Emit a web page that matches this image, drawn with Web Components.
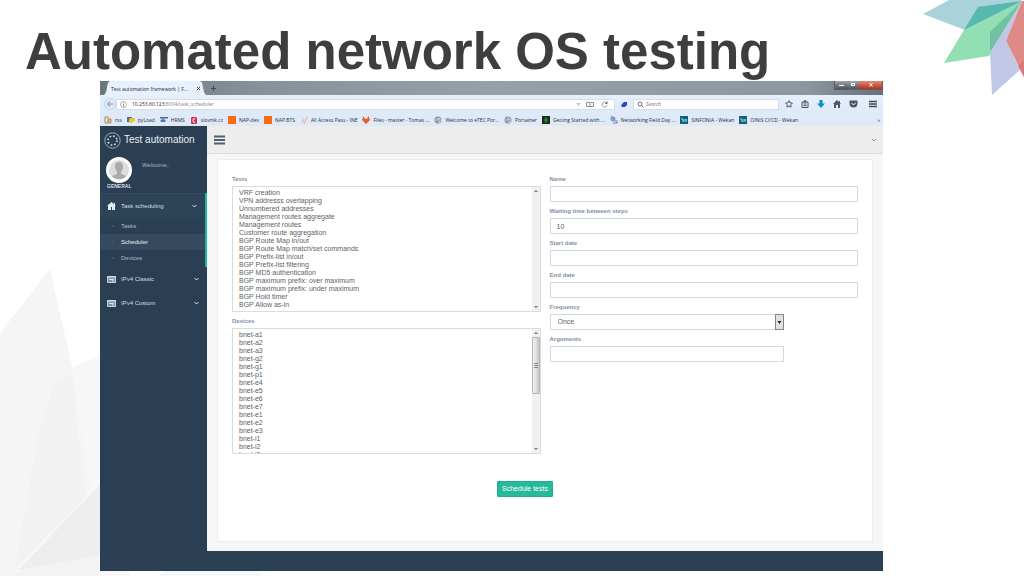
<!DOCTYPE html>
<html lang="en">
<head>
<meta charset="utf-8">
<title>Automated network OS testing</title>
<style>
  body { margin: 0; background: #fff; font-family: "Liberation Sans", Arial, sans-serif; }
</style>
</head>
<body>
<slide-page>
  <span slot="title">Automated network OS testing</span>
  <browser-window>
    <book-mark slot="bookmarks" icon="rss">rss</book-mark>
    <book-mark slot="bookmarks" icon="py">pyLoad</book-mark>
    <book-mark slot="bookmarks" icon="hr">HRMS</book-mark>
    <book-mark slot="bookmarks" icon="slov">slovnik.cz</book-mark>
    <book-mark slot="bookmarks" icon="nap">NAP-dev</book-mark>
    <book-mark slot="bookmarks" icon="nap">NAP.BTS</book-mark>
    <book-mark slot="bookmarks" icon="ine">All Access Pass - INE</book-mark>
    <book-mark slot="bookmarks" icon="lab">Files - master - Tomas ...</book-mark>
    <book-mark slot="bookmarks" icon="globe">Welcome to eTEC Por...</book-mark>
    <book-mark slot="bookmarks" icon="globe">Portainer</book-mark>
    <book-mark slot="bookmarks" icon="start">Getting Started with ...</book-mark>
    <book-mark slot="bookmarks" icon="field">Networking Field Day ...</book-mark>
    <book-mark slot="bookmarks" icon="wekan">SINFONIA - Wekan</book-mark>
    <book-mark slot="bookmarks" icon="wekan">OINIS CI/CD - Wekan</book-mark>
    <task-app>
      <side-bar slot="side"></side-bar>
      <schedule-form></schedule-form>
    </task-app>
  </browser-window>
</slide-page>

<script>
const define = (name, html, init) => {
  const template = document.createElement('template');
  template.innerHTML = html;
  customElements.define(name, class extends HTMLElement {
    constructor() {
      super();
      this.attachShadow({ mode: 'open' }).append(template.content.cloneNode(true));
    }
    connectedCallback() { if (init) init(this, this.shadowRoot); }
  });
};

/* The slide: heading, decorative shards, and the slotted window */
define('slide-page', `
<style>
  :host { display: block; position: relative; min-height: 100vh; overflow: hidden; box-sizing: border-box; padding: 23px 141px 5px 100px; }
  .shards, .leaves { position: absolute; z-index: -1; }
  .shards { left: 0; bottom: 0; width: 260px; height: 310px; }
  .leaves { right: 0; top: 0; width: 104px; height: 100px; z-index: 0; }
  h1 { margin: 0 -100px 0 -75px; font-size: 51px; line-height: 58px; font-weight: bold; color: #3e3e40; white-space: nowrap; }
</style>
<svg class="shards" viewBox="0 0 260 310" aria-hidden="true">
  <path fill="#f7f7f7" d="M72 101 130 77V310H60z"/>
  <path fill="#f5f5f5" d="M0 67 50 3 72 101 90 225 12 310H0z"/>
  <path fill="#f2f2f2" d="M54 117 72 109 84 220 88 238 15 303 36 180z"/>
  <path fill="#eeeeee" d="M15 303 110 206V288L20 304z"/>
  <path fill="#f8f8f8" d="M15 303 80 237 110 196V208L20 302z"/>
  <path fill="#f3f3f3" d="M20 304 100 289V310H8z"/>
  <path fill="#f3f8fb" d="M158 310 168 302H260V310z"/>
</svg>
<svg class="leaves" viewBox="920 0 104 100" aria-hidden="true">
  <path fill="#a9d2da" d="M923 14 949 0H1021L1022 1 965 30z"/>
  <path fill="#93dfb4" d="M944 63 964 30 1022 1 989 56z"/>
  <path fill="#56b8af" d="M964 30 978 7 1022 1z"/>
  <path fill="#6fc3a3" d="M990 32 1022 1 990 53z"/>
  <path fill="#c0c8e6" d="M990 52 1022 1 1006 41 1020 70 992 95z"/>
  <path fill="#dd8a88" d="M1022 1H1024V77L1006 41z"/>
  <path fill="#d97877" d="M1018 66 1024 60V77z"/>
</svg>
<h1><slot name="title"></slot></h1>
<slot></slot>`);

const bookmarkIcons = {
  rss: '<path d="M1 1h3v6H1zM5 3h2v4H5z" fill="none" stroke="#b5854a"/><path d="M3 6h4" stroke="#e8a145"/>',
  py: '<path d="M0 1h5v3H2v2H0z" fill="#3b78a8"/><path d="M3 2h5v3L4 7H2V4z" fill="#e9c92f"/>',
  hr: '<path d="M0 1h8v1.500H0z" fill="#4a64a0"/><path d="M1 4h4v1.500H1zM2 2l3 3" stroke="#5b74ad" fill="#5b74ad"/>',
  slov: '<rect x="1" y="1" width="6" height="7" rx="1" fill="#c83a54"/><path d="M5 2.500a2 2 0 1 0 0 4" fill="none" stroke="#fff"/>',
  nap: '<rect width="8" height="8" fill="#fb6b12"/>',
  ine: '<path d="M2 7 4 3M4 8 7 1" stroke="#e9a988" fill="none"/>',
  lab: '<path d="M4 8 0 4 1.500 0 3 3h2L6.500 0 8 4z" fill="#ee5a2b"/>',
  globe: '<circle cx="4" cy="4" r="3.500" fill="#8b98a8"/><path d="M1 4h3V2l2 1v3H4" fill="none" stroke="#dfe6ef" stroke-width=".8"/>',
  start: '<rect width="8" height="8" fill="#182c1c"/><path d="M4 1v6M3 3v2M5 3v2" stroke="#3fa03b"/>',
  field: '<circle cx="3" cy="3" r="2" fill="#9cb0d8" stroke="#6c86bd"/><path d="M1 0 7 7M3 7h4V4" fill="none" stroke="#6c86bd"/>',
  wekan: '<rect width="8" height="8" fill="#0d6478"/><path d="M1 3h2v3M4 3v3M6 3v3M5 4h2" fill="none" stroke="#b8dfe6" stroke-width=".8"/>'
};
define('book-mark', `
<style>
  :host { display: block; flex: none; }
  a { display: flex; align-items: center; gap: 3px; color: #26303c; text-decoration: none; white-space: nowrap; }
  svg { width: 8px; height: 8px; flex: none; }
</style>
<a href="#"><svg viewBox="0 0 8 8" aria-hidden="true"></svg><span><slot></slot></span></a>`,
(host, root) => { root.querySelector('svg').innerHTML = bookmarkIcons[host.getAttribute('icon')]; });

define('browser-window', `
<style>
  :host { display: block; font: 5px/8px "Open Sans", sans-serif; color: #222b36; }
  .tabs { height: 14px; display: flex; align-items: flex-end; background: linear-gradient(90deg, #6d757c, #87919a 20%, #95a0a8 50%, #8e979e 90%, #68717a); }
  .tab { box-sizing: border-box; height: 14px; width: 102px; margin-left: 4px; padding: 1px 5px 0 7px; display: flex; align-items: center; justify-content: space-between; background: #e7f0fb; clip-path: polygon(0 100%, 2px 80%, 4px 10%, 6px 0, 96px 0, 98px 10%, 100px 80%, 100% 100%); white-space: nowrap; }
  button { border: 0; padding: 0; margin: 0; background: none; color: inherit; font: inherit; display: flex; }
  svg { display: block; }
  .new { margin: 0 0 3px 4px; }
  .controls { margin-left: auto; align-self: flex-start; display: flex; border: 1px solid #59606a; border-top: 0; }
  .controls button { width: 12px; height: 8px; justify-content: center; background: linear-gradient(#a0a5aa, #4c545d); }
  .controls .close { width: 23px; background: linear-gradient(#dd8d79, #b92f18); }
  .nav { height: 18px; padding: 0 6px 0 4px; display: flex; align-items: center; background: linear-gradient(#e7effc, #dfe9f8); }
  .back { width: 12px; height: 12px; border: 1px solid #c3d4e6; border-radius: 50%; box-sizing: border-box; align-items: center; justify-content: center; background: #e0ebf7; }
  .field { box-sizing: border-box; height: 11px; display: flex; align-items: center; background: #fff; border: 1px solid #d3deec; }
  .url { flex: 1; padding: 0 6px 0 3px; gap: 5px; }
  .url p { flex: 1; margin: 0; color: #7c828a; }
  .url b { font-weight: normal; color: #20262e; }
  .url .reader { margin-right: 2px; }
  .ext { margin: 0 6px; }
  .search { width: 146px; padding: 0 3px; gap: 2px; }
  input { flex: 1; min-width: 0; border: 0; padding: 0; background: none; font: italic 5px/8px "Open Sans", sans-serif; outline: 0; }
  input::placeholder { color: #6f757c; opacity: 1; }
  .tools { display: flex; gap: 8px; margin-left: 6px; }
  .tools button:last-child { margin-left: 3px; }
  .marks { height: 13px; padding: 1px 3px 0 4px; display: flex; align-items: center; gap: 5px; overflow: hidden; background: #dfe9f8; box-sizing: border-box; }
  .more { margin-left: auto; }
</style>
<div class="tabs">
  <div class="tab"><span>Test automation framework | F...</span>
    <button aria-label="Close tab"><svg width="5" height="5"><path d="M1 1 4 4M4 1 1 4" stroke="#555"/></svg></button></div>
  <button class="new" aria-label="New tab"><svg width="7" height="7"><path d="M3.500 1v5M1 3.500h5" stroke="#424b55"/></svg></button>
  <div class="controls">
    <button aria-label="Minimize"><svg width="8" height="7"><path d="M2 4.500h5" stroke="#fff"/></svg></button>
    <button aria-label="Restore"><svg width="8" height="7"><rect x="2.500" y="2.500" width="3" height="2" fill="none" stroke="#fff"/></svg></button>
    <button class="close" aria-label="Close"><svg width="8" height="7"><path d="M2.500 2 5.500 5.500M5.500 2 2.500 5.500" stroke="#fff"/></svg></button>
  </div>
</div>
<div class="nav">
  <button class="back" aria-label="Back"><svg width="8" height="8"><path d="M7 4H2M4 1.500 1.500 4 4 6.500" fill="none" stroke="#a5b2c0" stroke-width="1.500"/></svg></button>
  <div class="field url">
    <svg width="7" height="7"><circle cx="3.500" cy="3.500" r="3" fill="none" stroke="#888" stroke-width=".7"/><path d="M3.500 3v2.500M3.500 1.500v1" stroke="#777" stroke-width=".8"/></svg>
    <p><b>10.253.60.123</b>:8004/task_scheduler</p>
    <svg width="5" height="5"><path d="M0 1h5L2.500 4z" fill="#c4c8cd"/></svg>
    <svg class="reader" width="8" height="7"><path d="M.5 1.500h3l.5.500.5-.500h3v4h-7zM4 2v4" fill="none" stroke="#8a939c"/></svg>
    <svg width="7" height="7"><path d="M5.500 2A2.500 2.500 0 1 0 6 4" fill="none" stroke="#717b85" stroke-width=".8"/><path d="M6.500 0v3h-3z" fill="#717b85"/></svg>
  </div>
  <button class="ext" aria-label="Extension"><svg width="6" height="7"><path d="M1 3 3 1h3v3L4 6H1L0 5z" fill="#2948c8"/></svg></button>
  <div class="field search">
    <svg width="7" height="7"><circle cx="3" cy="3" r="2" fill="none" stroke="#66707a"/><path d="M4.500 4.500 6.500 6.500" stroke="#66707a"/></svg>
    <input type="search" placeholder="Search" aria-label="Search">
  </div>
  <div class="tools">
    <button aria-label="Bookmark"><svg width="8" height="8" viewBox="0 0 8 8"><path d="m4 .700 1 2.100 2.400.300-1.700 1.700.400 2.300L4 6l-2.100 1.100.400-2.300L.600 3.100 3 2.800z" fill="none" stroke="#4d5864"/></svg></button>
    <button aria-label="Bookmarks list"><svg width="8" height="8"><path d="M1 2h6v5.500H1zM3 .800h2V2H3zM2.500 4h3M2.500 5.700h3" fill="none" stroke="#4d5864"/></svg></button>
    <button aria-label="Downloads"><svg width="8" height="8"><path d="M2.500 0h3v3.500H8L4 8 0 3.500h2.500z" fill="#138bc9"/></svg></button>
    <button aria-label="Home"><svg width="8" height="8"><path d="M4 0 0 4h1v4h2V5h2v3h2V4h1L7 3V1H6v1z" fill="#4d5864"/></svg></button>
    <button aria-label="Pocket"><svg width="9" height="8"><path d="M.5 .500h8v3a4 4 0 0 1-8 0z" fill="#4d5864"/><path d="M2.500 3 4.500 5 6.500 3" fill="none" stroke="#fff"/></svg></button>
    <button aria-label="Menu"><svg width="8" height="8"><path d="M0 1.500h8M0 4h8M0 6.500h8" stroke="#414b56" stroke-width="1.500"/></svg></button>
  </div>
</div>
<nav class="marks"><slot name="bookmarks"></slot><span class="more">»</span></nav>
<slot></slot>`);

define('task-app', `
<style>
  :host { display: grid; grid-template-columns: 107px minmax(0, 1fr); padding-bottom: 20px; background: #2a3f54; font: 6px/8px "Liberation Sans", Arial, sans-serif; color: #73879c; }
  main { background: #f5f6f7; }
  header { box-sizing: border-box; height: 28px; padding: 0 7px; display: flex; align-items: center; justify-content: space-between; background: #ededed; border-bottom: 1px solid #d9dee4; }
  button { display: flex; padding: 0; border: 0; background: none; }
  section { padding: 5px 10px 9px; }
</style>
<slot name="side"></slot>
<main>
  <header>
    <button aria-label="Toggle menu"><svg width="11" height="10"><path d="M0 1.500h11M0 5h11M0 8.500h11" stroke="#51606f" stroke-width="2"/></svg></button>
    <button aria-label="User menu"><svg width="4" height="4"><path d="M0 1 2 3 4 1" fill="none" stroke="#8b939b"/></svg></button>
  </header>
  <section><slot></slot></section>
</main>`);

define('side-bar', `
<style>
  :host { display: block; color: #d5dde5; }
  a { color: inherit; text-decoration: none; }
  .brand { height: 28px; padding: 0 4px; display: flex; align-items: center; gap: 3px; font-size: 10px; line-height: 12px; color: #ecf0f1; white-space: nowrap; }
  .profile { height: 39px; padding: 0 6px; display: flex; gap: 10px; color: #a9b6c3; }
  .profile p { margin: 7px 0 0; }
  figure { margin: 0; width: 26px; }
  figure svg { display: block; margin-top: 3px; }
  figcaption { font-size: 5px; line-height: 6px; font-weight: bold; padding-left: 1px; color: #d5dde5; }
  .item { height: 24px; padding: 0 8px 0 7px; display: grid; grid-template-columns: 9px 1fr auto; column-gap: 5px; align-items: center; }
  .open { border-right: 2px solid #1abb9c; }
  .open .item { background: #2d4358; border-top: 1px solid #34495e; box-sizing: border-box; }
  ul { margin: 0; padding: 1px 0; list-style: none; }
  li { height: 16px; display: grid; grid-template-columns: 9px 1fr; column-gap: 4px; padding-left: 8px; align-items: center; color: #aebbc8; }
  li::before { content: ""; width: 2px; height: 2px; margin-left: 4px; border-radius: 50%; background: #42586d; }
  li.current { background: #354a5f; color: #e8edf2; }
</style>
<a class="brand" href="#">
  <svg width="17" height="17"><circle cx="8.500" cy="8.500" r="7.700" fill="none" stroke="#9dabb8"/><circle cx="8.500" cy="8.500" r="4.500" fill="none" stroke="#dfe5ea" stroke-width="1.600" stroke-dasharray="1.600 1.940"/></svg>
  <span>Test automation</span></a>
<div class="profile">
  <figure>
    <svg width="26" height="26"><circle cx="13" cy="13" r="11.500" fill="#dcdcdc" stroke="#fff" stroke-width="3"/><path d="M13 5c-3 0-4 2-4 5 0 2 1 3 2 5v2l-5 2c2 4 12 4 14 0l-5-2v-2c1-2 2-3 2-5 0-3-1-5-4-5" fill="#aaa"/></svg>
    <figcaption>GENERAL</figcaption>
  </figure>
  <p>Welcome,</p>
</div>
<nav>
  <div class="open">
    <a class="item" href="#"><svg width="9" height="8"><path d="M4.500 0 0 4h1v4h3V5h1v3h3V4h1L8 3V1H7v1z" fill="#e6ebef"/></svg><span>Task scheduling</span><svg width="5" height="4"><path d="M.5 1 2.500 3 4.500 1" fill="none" stroke="#dfe5ea"/></svg></a>
    <ul><li><a href="#">Tasks</a></li><li class="current"><a href="#">Scheduler</a></li><li><a href="#">Devices</a></li></ul>
  </div>
  <a class="item" href="#"><svg width="9" height="7"><path d="M.5 .500h8v6h-8z" fill="#7f91a2" stroke="#c7d1da"/><path d="M0 1h9M2 3.500h5M5 5h2" fill="none" stroke="#dbe2e8"/></svg><span>IPv4 Classic</span><svg width="5" height="4"><path d="M.5 1 2.500 3 4.500 1" fill="none" stroke="#dfe5ea"/></svg></a>
  <a class="item" href="#"><svg width="9" height="7"><path d="M.5 .500h8v6h-8z" fill="#7f91a2" stroke="#c7d1da"/><path d="M0 1h9M2 3.500h5M5 5h2" fill="none" stroke="#dbe2e8"/></svg><span>IPv4 Custom</span><svg width="5" height="4"><path d="M.5 1 2.500 3 4.500 1" fill="none" stroke="#dfe5ea"/></svg></a>
</nav>`);

/* Multi-select list with its own scroll rail */
define('list-field', `
<style>
  :host { display: grid; row-gap: 3px; }
  label { font-weight: bold; font-size: 6px; line-height: 8px; color: #8391a8; }
  .box { box-sizing: border-box; height: 126px; display: flex; border: 1px solid #d9dcdf; background: #fff; }
  select { flex: 1; min-width: 0; height: 100%; border: 0; margin: 0; padding: 2px 0 0 6px; box-sizing: border-box; overflow: hidden; scrollbar-width: none; outline: 0; background: none; border-radius: 0; font: 7px/8px "Liberation Sans", Arial, sans-serif; color: #606264; }
  select::-webkit-scrollbar { display: none; }
  option { padding: 0; height: 8px; min-height: 8px; line-height: 8px; color: #606264; }
  .rail { width: 8px; flex: none; display: flex; flex-direction: column; background: #f0f0f0; }
  .rail svg { flex: none; display: block; }
  .thumb { display: none; box-sizing: border-box; height: 57px; border: 1px solid #b4b4b4; border-radius: 1px; background: linear-gradient(90deg, #f4f4f4, #c8c8c8); align-items: center; justify-content: center; }
  :host([scrolls]) .thumb { display: flex; }
  .down { margin-top: auto; }
</style>
<label for="list"></label>
<div class="box">
  <select id="list" multiple></select>
  <div class="rail" aria-hidden="true">
    <svg width="8" height="8"><path d="M2 5 4 3 6 5z" fill="#777"/></svg>
    <div class="thumb"><svg width="4" height="5"><path d="M0 .500h4M0 2.500h4M0 4.500h4" stroke="#888"/></svg></div>
    <svg class="down" width="8" height="8"><path d="M2 3 4 5 6 3z" fill="#777"/></svg>
  </div>
</div>`,
(host, root) => {
  root.querySelector('label').textContent = host.getAttribute('label');
  const select = root.querySelector('select');
  host.getAttribute('options').split('|').forEach(text => select.add(new Option(text)));
});

define('text-field', `
<style>
  :host { display: grid; row-gap: 3px; }
  label { font-weight: bold; font-size: 6px; line-height: 8px; color: #8391a8; }
  input { box-sizing: border-box; width: 100%; height: 16px; margin: 0; padding: 0 6px; border: 1px solid #d5d9dd; border-radius: 0; background: #fff; font: 7px/8px "Liberation Sans", Arial, sans-serif; color: #606264; outline: 0; }
</style>
<label for="field"></label><input id="field" type="text">`,
(host, root) => {
  root.querySelector('label').textContent = host.getAttribute('label');
  root.querySelector('input').value = host.getAttribute('value') || '';
});

define('choice-field', `
<style>
  :host { display: grid; row-gap: 3px; }
  label { font-weight: bold; font-size: 6px; line-height: 8px; color: #8391a8; }
  .box { display: grid; position: relative; }
  select { appearance: none; box-sizing: border-box; width: 100%; height: 16px; margin: 0; padding: 0 14px 0 7px; border: 1px solid #d5d9dd; border-radius: 0; background: #fff; font: 7px/8px "Liberation Sans", Arial, sans-serif; color: #606264; outline: 0; }
  svg { position: absolute; right: 0; top: 0; pointer-events: none; }
</style>
<label for="choice"></label>
<div class="box"><select id="choice"></select>
<svg width="9" height="16" aria-hidden="true"><rect x=".5" y=".5" width="8" height="15" fill="#e2e2e2" stroke="#858585"/><path d="M2.500 7h4l-2 3z" fill="#222"/></svg></div>`,
(host, root) => {
  root.querySelector('label').textContent = host.getAttribute('label');
  root.querySelector('select').add(new Option(host.getAttribute('value')));
});

define('schedule-form', `
<style>
  :host { display: block; padding: 15px 14px 44px; border: 1px solid #ebedef; background: #fff; }
  .columns { display: grid; grid-template-columns: 1fr 1fr; column-gap: 9px; }
  .column { display: grid; row-gap: 5px; align-content: start; }
  .short { width: 76%; }
  button { display: block; box-sizing: border-box; height: 16px; width: 56px; margin: 27px 0 0 265px; padding: 0; border: 1px solid #1fae8e; border-radius: 1px; background: #26b99a; color: #fff; font: 7px/8px "Liberation Sans", Arial, sans-serif; }
</style>
<form onsubmit="return false">
  <div class="columns">
    <div class="column">
      <list-field label="Tests" options="VRF creation|VPN addresss overlapping|Unnumbered addresses|Management routes aggregate|Management routes|Customer route aggregation|BGP Route Map in/out|BGP Route Map match/set commands|BGP Prefix-list in/out|BGP Prefix-list filtering|BGP MD5 authentication|BGP maximum prefix: over maximum|BGP maximum prefix: under maximum|BGP Hold timer|BGP Allow as-in"></list-field>
      <list-field scrolls label="Devices" options="bnet-a1|bnet-a2|bnet-a3|bnet-g2|bnet-g1|bnet-p1|bnet-e4|bnet-e5|bnet-e6|bnet-e7|bnet-e1|bnet-e2|bnet-e3|bnet-i1|bnet-i2|bnet-i3"></list-field>
    </div>
    <div class="column">
      <text-field label="Name"></text-field>
      <text-field label="Waiting time between steps" value="10"></text-field>
      <text-field label="Start date"></text-field>
      <text-field label="End date"></text-field>
      <choice-field class="short" label="Frequency" value="Once"></choice-field>
      <text-field class="short" label="Arguments"></text-field>
    </div>
  </div>
  <button>Schedule tests</button>
</form>`);
</script>
</body>
</html>
